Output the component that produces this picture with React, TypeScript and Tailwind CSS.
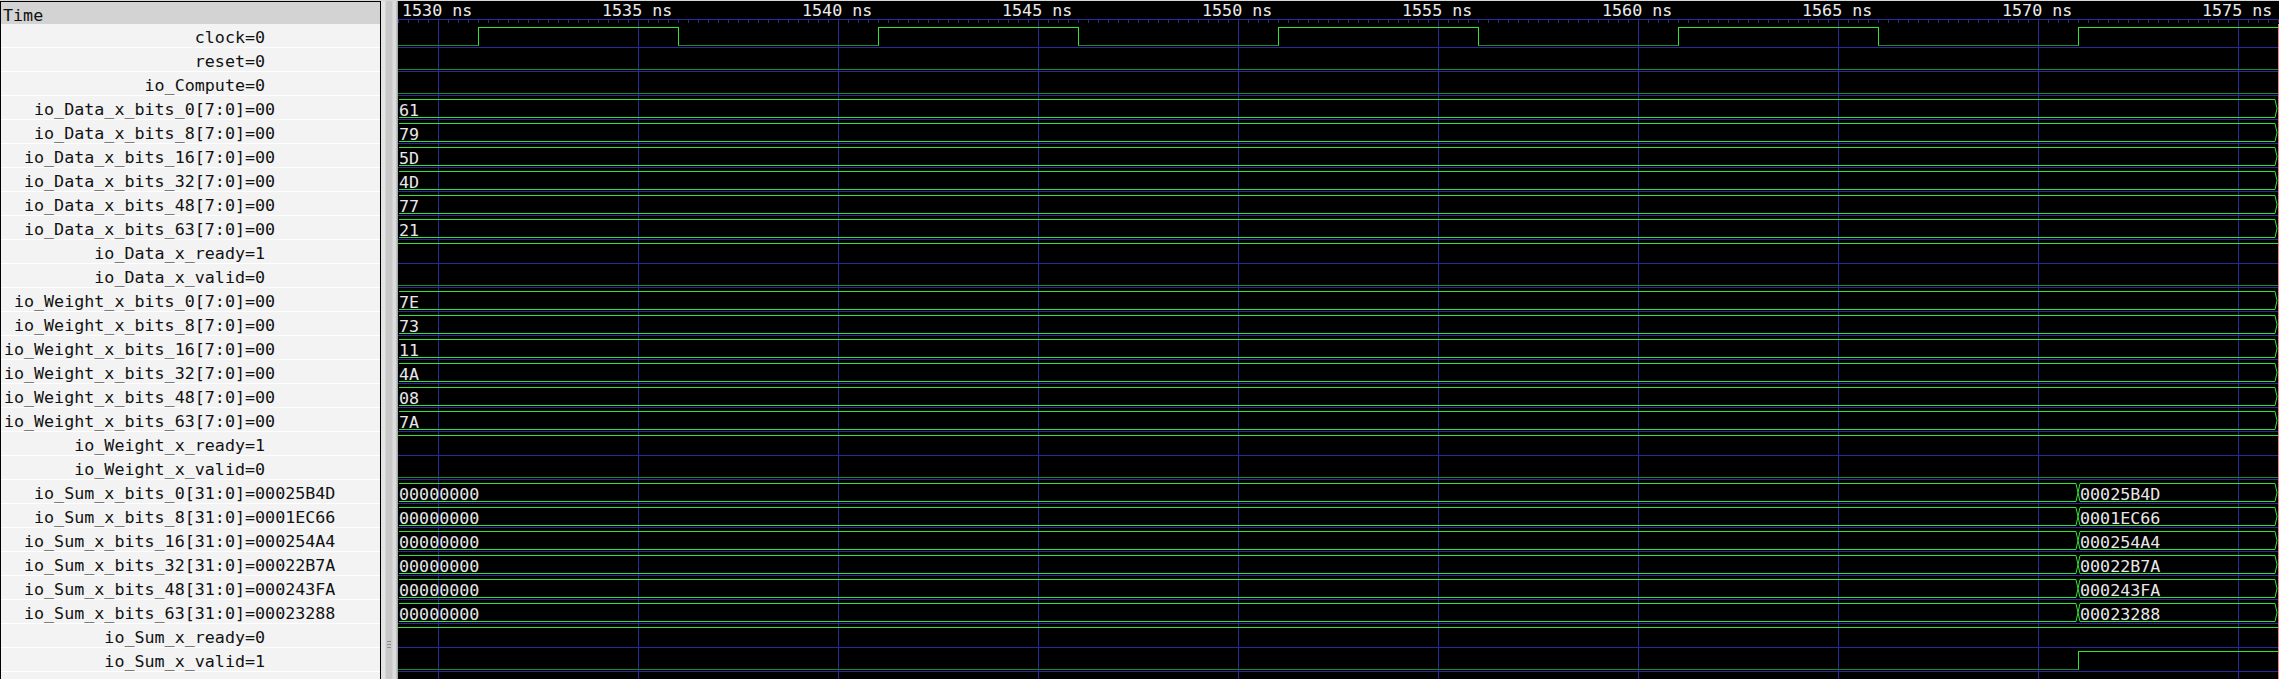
import React from "react";

const W = 1881; // wave area width (x 398..2279)
const END = 1880; // local x where the dump ends / marker sits
const GREEN = "#2ee62e";
const DARK = "#1b8e1b";
const BLUE = "#2a2a9c";
const MARK = "#ff8080";
const GRID = Array.from({ length: 10 }, (_, k) => 40 + 200 * k);
const TICKS = Array.from({ length: 189 }, (_, k) => k * 10);

type Bit = { kind: "bit"; name: string; value: string; edges: [number, 0 | 1][] };
type Bus = { kind: "bus"; name: string; value: string; segs: [number, string][] };
type Sig = Bit | Bus;

const clockEdges: [number, 0 | 1][] = [[0, 0]];
for (let x = 80; x < END; x += 200) clockEdges.push([x, clockEdges.length % 2 === 1 ? 1 : 0]);

const bit = (name: string, value: string, edges: [number, 0 | 1][]): Sig => ({ kind: "bit", name, value, edges });
const bus = (name: string, value: string, segs: [number, string][]): Sig => ({ kind: "bus", name, value, segs });

const signals: Sig[] = [
    bit("clock", "0", clockEdges),
    bit("reset", "0", [[0, 0]]),
    bit("io_Compute", "0", [[0, 0]]),
    bus("io_Data_x_bits_0[7:0]", "00", [[0, "61"]]),
    bus("io_Data_x_bits_8[7:0]", "00", [[0, "79"]]),
    bus("io_Data_x_bits_16[7:0]", "00", [[0, "5D"]]),
    bus("io_Data_x_bits_32[7:0]", "00", [[0, "4D"]]),
    bus("io_Data_x_bits_48[7:0]", "00", [[0, "77"]]),
    bus("io_Data_x_bits_63[7:0]", "00", [[0, "21"]]),
    bit("io_Data_x_ready", "1", [[0, 1]]),
    bit("io_Data_x_valid", "0", [[0, 0]]),
    bus("io_Weight_x_bits_0[7:0]", "00", [[0, "7E"]]),
    bus("io_Weight_x_bits_8[7:0]", "00", [[0, "73"]]),
    bus("io_Weight_x_bits_16[7:0]", "00", [[0, "11"]]),
    bus("io_Weight_x_bits_32[7:0]", "00", [[0, "4A"]]),
    bus("io_Weight_x_bits_48[7:0]", "00", [[0, "08"]]),
    bus("io_Weight_x_bits_63[7:0]", "00", [[0, "7A"]]),
    bit("io_Weight_x_ready", "1", [[0, 1]]),
    bit("io_Weight_x_valid", "0", [[0, 0]]),
    bus("io_Sum_x_bits_0[31:0]", "00025B4D", [[0, "00000000"], [1680, "00025B4D"]]),
    bus("io_Sum_x_bits_8[31:0]", "0001EC66", [[0, "00000000"], [1680, "0001EC66"]]),
    bus("io_Sum_x_bits_16[31:0]", "000254A4", [[0, "00000000"], [1680, "000254A4"]]),
    bus("io_Sum_x_bits_32[31:0]", "00022B7A", [[0, "00000000"], [1680, "00022B7A"]]),
    bus("io_Sum_x_bits_48[31:0]", "000243FA", [[0, "00000000"], [1680, "000243FA"]]),
    bus("io_Sum_x_bits_63[31:0]", "00023288", [[0, "00000000"], [1680, "00023288"]]),
    bit("io_Sum_x_ready", "0", [[0, 1]]),
    bit("io_Sum_x_valid", "1", [[0, 0], [1680, 1]]),
];

const Grid = ({ h, from = 0 }: { h: number; from?: number }) => (
    <>
        {GRID.map((x) => (
            <line key={x} x1={x + 0.5} x2={x + 0.5} y1={from} y2={h} stroke={BLUE} />
        ))}
    </>
);

const BitWave = ({ edges }: { edges: [number, 0 | 1][] }) => (
    <>
        {edges.map(([x, lvl], i) => {
            const next = i + 1 < edges.length ? edges[i + 1][0] : END;
            const y = lvl ? 3.5 : 21.5;
            return (
                <g key={i}>
                    <line x1={x} x2={next + 1} y1={y} y2={y} stroke={lvl ? GREEN : DARK} />
                    {i > 0 && <line x1={x + 0.5} x2={x + 0.5} y1={3.5} y2={21.5} stroke={GREEN} />}
                </g>
            );
        })}
    </>
);

const BusWave = ({ segs }: { segs: [number, string][] }) => (
    <>
        {segs.map(([s, v], i) => {
            const e = i + 1 < segs.length ? segs[i + 1][0] : END - 1;
            const d =
                s === 0
                    ? `M1 3.5 H${e - 2} L${e} 12.5 L${e - 2} 21.5 H1`
                    : `M${s} 12.5 L${s + 2} 3.5 H${e - 2} L${e} 12.5 L${e - 2} 21.5 H${s + 2} Z`;
            return (
                <g key={i}>
                    <path d={d} fill="none" stroke={GREEN} />
                    <text x={s === 0 ? 1 : s + 2} y={20} fill="#e8e8e8">
                        {v}
                    </text>
                </g>
            );
        })}
    </>
);

const WaveRow = ({ sig }: { sig: Sig }) => (
    <svg width={W} height={24} className="block shrink-0">
        <Grid h={24} />
        <line x1={0} x2={W} y1={23.5} y2={23.5} stroke={BLUE} />
        {sig.kind === "bit" ? <BitWave edges={sig.edges} /> : <BusWave segs={sig.segs} />}
        <line x1={END + 0.5} x2={END + 0.5} y1={0} y2={24} stroke={MARK} />
    </svg>
);

const Ruler = () => (
    <svg width={W} height={23} className="block shrink-0">
        <Grid h={23} from={18} />
        <line x1={0} x2={W} y1={18.5} y2={18.5} stroke={BLUE} />
        {TICKS.map((x) => (
            <line key={x} x1={x + 0.5} x2={x + 0.5} y1={18.5} y2={22} stroke={BLUE} />
        ))}
        {GRID.map((x, k) => (
            <text key={x} x={x - 36} y={15} fill="#ececec">
                {1530 + 5 * k} ns
            </text>
        ))}
    </svg>
);

const SignalPanel = () => (
    <div className="w-[381px] h-full shrink-0 flex flex-col bg-[#f3f3f3] border-l border-t border-r border-black text-[#111]">
        <div className="h-[22px] shrink-0 bg-[#d3d3d3] pl-[2px] leading-[26px] overflow-hidden">Time</div>
        {signals.map((s) => (
            <div key={s.name} className="h-[24px] shrink-0 flex border-b border-white leading-[26px] overflow-hidden whitespace-pre">
                <span className="w-[244px] shrink-0 text-right">{s.name}</span>
                <span>={s.value}</span>
            </div>
        ))}
    </div>
);

const Splitter = () => (
    <div className="w-[17px] h-full shrink-0 flex flex-col pt-[640px] bg-[linear-gradient(to_right,#e4e4e4_0px,#e4e4e4_4px,#c9c9c9_5px,#c9c9c9_11px,#dcdcdc_12px,#dcdcdc_15px,#a8a8a8_16px)]">
        <div className="ml-[6px] w-[4px] h-px bg-[#8c8c8c] mb-[2px]" />
        <div className="ml-[6px] w-[4px] h-px bg-[#8c8c8c] mb-[2px]" />
        <div className="ml-[6px] w-[4px] h-px bg-[#8c8c8c]" />
    </div>
);

const WavePanel = () => (
    <div className="w-[1881px] h-full shrink-0 flex flex-col bg-black overflow-hidden">
        <Ruler />
        {signals.map((s) => (
            <WaveRow key={s.name} sig={s} />
        ))}
        <svg width={W} height={12} className="block shrink-0">
            <Grid h={12} />
            <line x1={END + 0.5} x2={END + 0.5} y1={0} y2={12} stroke={MARK} />
        </svg>
    </div>
);

export default function App() {
    return (
        <div className="w-[2279px] h-[679px] overflow-hidden flex pt-px bg-[#d8d8d8] font-['DejaVu_Sans_Mono',monospace] text-[16.7px]">
            <SignalPanel />
            <Splitter />
            <WavePanel />
        </div>
    );
}
